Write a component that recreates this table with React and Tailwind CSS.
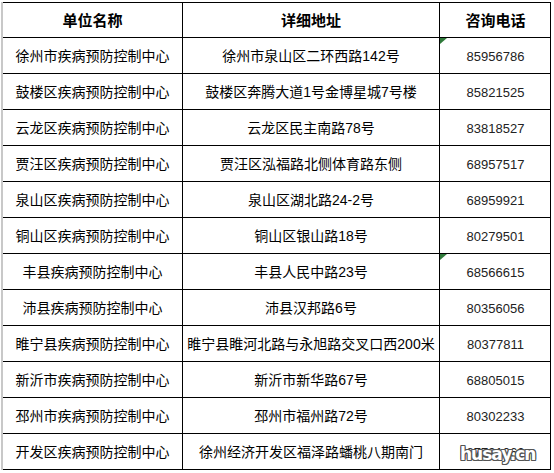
const rows = [
  ['徐州市疾病预防控制中心', '徐州市泉山区二环西路142号', '85956786', true],
  ['鼓楼区疾病预防控制中心', '鼓楼区奔腾大道1号金博星城7号楼', '85821525'],
  ['云龙区疾病预防控制中心', '云龙区民主南路78号', '83818527'],
  ['贾汪区疾病预防控制中心', '贾汪区泓福路北侧体育路东侧', '68957517'],
  ['泉山区疾病预防控制中心', '泉山区湖北路24-2号', '68959921'],
  ['铜山区疾病预防控制中心', '铜山区银山路18号', '80279501'],
  ['丰县疾病预防控制中心', '丰县人民中路23号', '68566615', true],
  ['沛县疾病预防控制中心', '沛县汉邦路6号', '80356056'],
  ['睢宁县疾病预防控制中心', '睢宁县睢河北路与永旭路交叉口西200米', '80377811'],
  ['新沂市疾病预防控制中心', '新沂市新华路67号', '68805015'],
  ['邳州市疾病预防控制中心', '邳州市福州路72号', '80302233'],
  ['开发区疾病预防控制中心', '徐州经济开发区福泽路蟠桃八期南门', '87791062'],
]

const cjk = "font-['Liberation_Sans','Noto_Sans_CJK_SC',sans-serif]"

function Row({ name, addr, tel, mark, last }) {
  return (
    <div className="grid h-[36px] grid-cols-[180px_257px_111px] border-b border-black">
      <div className="flex items-center justify-center border-r border-black pt-[2px] text-[14px] text-black">{name}</div>
      <div className="flex items-center justify-center border-r border-black pt-[2px] text-[14px] text-black">{addr}</div>
      <div className="relative flex items-center justify-center pt-[2px] text-[13px] text-[#222]">
        {mark && (
          <svg className="absolute left-0 top-0" width="7" height="6" viewBox="0 0 7 6">
            <polygon points="0,0 7,0 0,6" fill="#2f7a3a" />
          </svg>
        )}
        <span className="font-['Liberation_Sans',sans-serif]">{tel}</span>
        {last && (
          <span className="absolute left-[20px] top-[8px] font-['DejaVu_Sans',sans-serif] text-[17px] font-bold tracking-[-1px] text-white [text-shadow:1px_1px_0_#555,-1px_-1px_0_#555,1px_-1px_0_#555,-1px_1px_0_#555,0_1px_0_#555,0_-1px_0_#555,1px_0_0_#555,-1px_0_0_#555]">
            husay.cn
          </span>
        )}
      </div>
    </div>
  )
}

export default function App() {
  return (
    <div className={`h-[473px] w-[554px] overflow-hidden bg-white pt-[2px] pl-[1px] ${cjk}`}>
      <div className="w-[550px] border-l-2 border-r border-l-[#c8c8c8] border-r-black">
        <div className="border-t border-black">
          <div className="grid h-[35px] grid-cols-[180px_257px_111px] border-b border-black text-[15px] font-bold text-black">
            <div className="flex items-center justify-center border-r border-black pt-[2px]">单位名称</div>
            <div className="flex items-center justify-center border-r border-black pt-[2px]">详细地址</div>
            <div className="flex items-center justify-center pt-[2px]">咨询电话</div>
          </div>
          {rows.map((r, i) => (
            <Row key={i} name={r[0]} addr={r[1]} tel={r[2]} mark={r[3]} last={i === rows.length - 1} />
          ))}
        </div>
      </div>
    </div>
  )
}
